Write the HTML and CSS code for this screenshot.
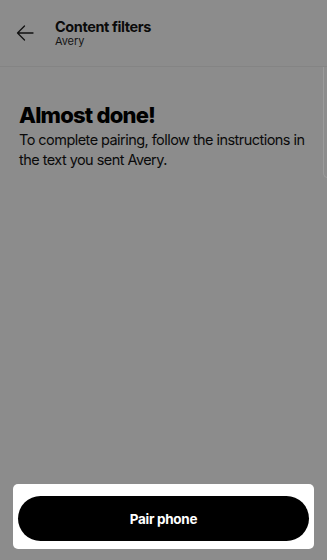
FILE: index.html
```html
<!DOCTYPE html>
<html lang="en">
<head>
<meta charset="utf-8">
<title>Content filters</title>
<link rel="stylesheet" href="styles.css">
</head>
<body>
<div class="screen">
  <header class="topbar">
    <button class="back" aria-label="Back">
      <svg width="18" height="16" viewBox="0 0 18 16" fill="none" stroke="#111" stroke-width="1.3" stroke-linecap="round" stroke-linejoin="round">
        <path d="M17 8H1.5M8.5 1L1.5 8l7 7"/>
      </svg>
    </button>
    <div class="titles">
      <div class="title">Content filters</div>
      <div class="subtitle">Avery</div>
    </div>
  </header>
  <section class="carousel">
    <div class="slide">
      <h1 class="heading">Almost done!</h1>
      <p class="body-text">To complete pairing, follow the instructions in the text you sent Avery.</p>
    </div>
    <div class="peek"></div>
  </section>
  <footer class="sheet">
    <button class="primary">Pair phone</button>
  </footer>
</div>
</body>
</html>
```

FILE: styles.css
```css
* { box-sizing: border-box; }
html, body { margin: 0; padding: 0; }
body {
  background: #8c8c8c;
  font-family: Inter, "Liberation Sans", Arial, sans-serif;
  color: #000;
  overflow: hidden;
}
.screen {
  width: 327px;
  height: 560px;
  display: flex;
  flex-direction: column;
}
.topbar {
  height: 67px;
  flex: 0 0 67px;
  display: flex;
  align-items: flex-start;
  padding: 18px 0 0 16px;
  border-bottom: 1px solid #848484;
}
.back {
  background: none;
  border: 0;
  padding: 0;
  margin: 7px 0 0 0;
  width: 18px;
  height: 16px;
  display: block;
}
.back svg { display: block; }
.titles { margin-left: 21px; }
.title {
  font-size: 14.5px;
  font-weight: 700;
  letter-spacing: -0.4px;
  line-height: 17px;
  color: #0b0b0b;
}
.subtitle {
  font-size: 11px;
  line-height: 13px;
  color: #151515;
  letter-spacing: -0.1px;
}
.carousel {
  display: flex;
  align-items: flex-start;
}
.slide {
  flex: 0 0 323px;
  padding: 35px 0 0 19px;
}
.heading {
  margin: 0;
  font-size: 22px;
  line-height: 26px;
  font-weight: 800;
  letter-spacing: -0.8px;
  color: #000;
}
.body-text {
  margin: 2px 0 0;
  font-size: 14.5px;
  line-height: 20px;
  letter-spacing: -0.55px;
  color: #0a0a0a;
}
.peek {
  flex: 0 0 20px;
  height: 111px;
  border: 1px solid #9b9b9b;
  border-right: 0;
  border-top: 0;
  border-radius: 0 0 0 5px;
}
.sheet {
  margin: auto 13px 11px;
  background: #fff;
  border-radius: 5px;
  padding: 12px 5px 8px;
}
.primary {
  display: block;
  width: 100%;
  height: 45px;
  border: 0;
  border-radius: 23px;
  background: #000;
  color: #fff;
  font-family: Inter, "Liberation Sans", Arial, sans-serif;
  font-size: 13.5px;
  font-weight: 700;
  letter-spacing: -0.3px;
}
```
